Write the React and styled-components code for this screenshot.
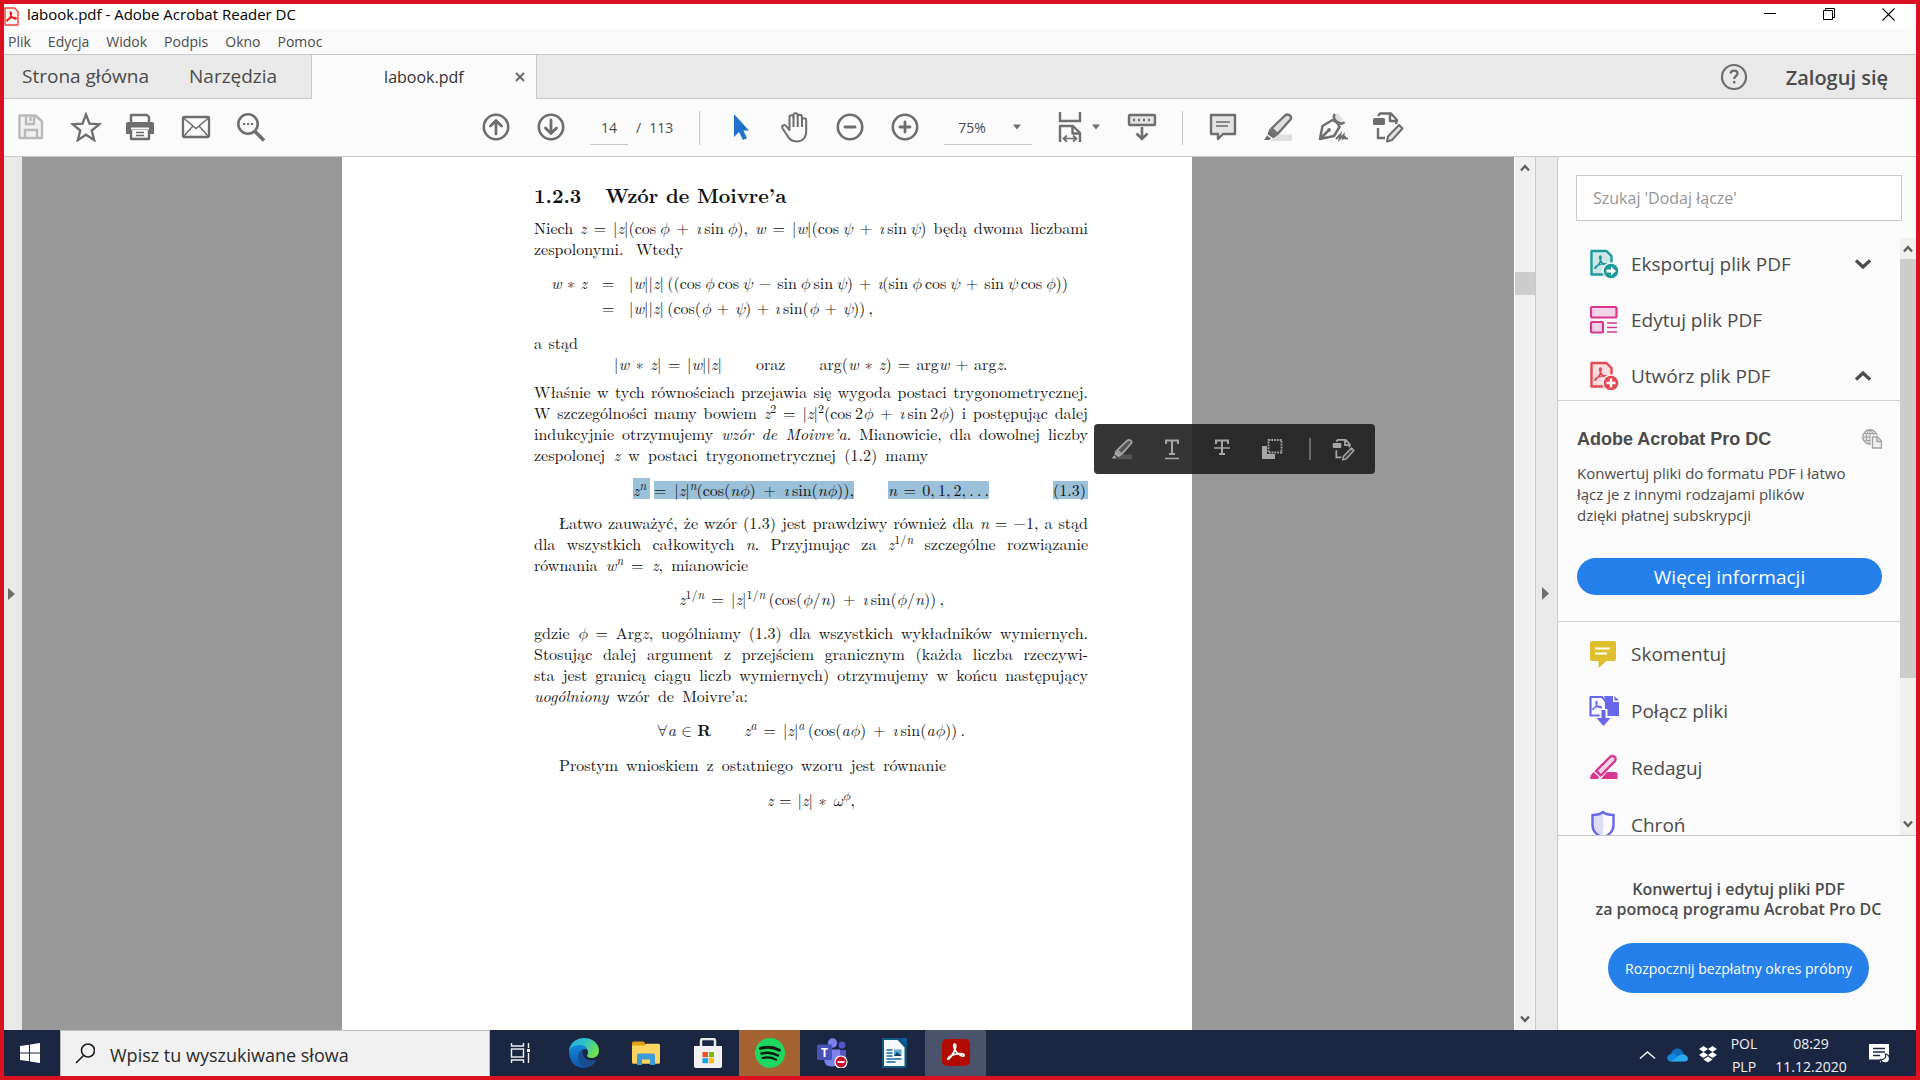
import React from "react";
import styled, { createGlobalStyle, css } from "styled-components";

const GlobalStyle = createGlobalStyle`
  *, *::before, *::after { box-sizing: border-box; }
  body { margin: 0; font-family: "Segoe UI", "Open Sans", "Noto Sans", sans-serif; color: #4b4b4b; }
  button, input, select { font: inherit; color: inherit; }
  button { border: 0; padding: 0; background: none; cursor: pointer; }
  p, h1, h2, h3 { margin: 0; }
  svg { display: block; flex: none; }
`;

/* ---------- window ---------- */
const Window = styled.div`
  height: 100vh;
  display: flex;
  flex-direction: column;
  border: 4px solid #d91120;
  background: #fbfbfb;
  overflow: hidden;
`;
const TitleBar = styled.header`
  display: flex;
  align-items: center;
  height: 25px;
  flex: none;
  background: #fff;
  padding-right: 21px;
`;
const WindowTitle = styled.h1`
  flex: 1;
  margin-left: 8px;
  font-size: 15px;
  line-height: 20px;
  font-weight: 400;
  color: #000;
  padding-bottom: 5px;
`;
const WindowButtons = styled.div`
  display: flex;
  gap: 46px;
  padding-bottom: 5px;
`;
const MenuBar = styled.nav`
  display: flex;
  flex: none;
  gap: 17px;
  height: 26px;
  padding-left: 4px;
  border-bottom: 1px solid #c8c8c8;
  background: #fafafa;
  font-size: 14px;
  line-height: 25px;
`;
const TabBar = styled.nav`
  display: flex;
  flex: none;
  align-items: center;
  height: 44px;
  background: #e9e9e9;
  border-bottom: 1px solid #c8c8c8;
`;
const AppTab = styled.button`
  font-size: 19px;
  line-height: 24px;
  padding-bottom: 2px;
  margin-left: ${(p) => (p.$first ? 18 : 40)}px;
`;
const DocTab = styled.div`
  display: flex;
  align-items: center;
  align-self: stretch;
  width: 226px;
  margin: 0 0 -1px 34px;
  padding: 0 11px 0 72px;
  justify-content: space-between;
  border: solid #c8c8c8;
  border-width: 0 1px;
  background: #fbfbfb;
  font-size: 16px;
  color: #323232;
`;
const Account = styled.div`
  display: flex;
  align-items: center;
  gap: 38px;
  margin-left: auto;
  padding-right: 28px;
`;
const LoginButton = styled.button`
  padding-top: 2px;
  font-size: 20px;
  line-height: 24px;
  font-weight: 600;
`;

/* ---------- toolbar ---------- */
const Toolbar = styled.div`
  display: flex;
  flex: none;
  align-items: center;
  height: 58px;
  border-bottom: 1px solid #c8c8c8;
  font-size: 14px;
`;
const ToolGroup = styled.div`
  display: flex;
  align-items: center;
  margin-left: ${(p) => p.$before || 0}px;
`;
const ToolButton = styled.button`
  display: flex;
  justify-content: center;
  align-items: center;
  gap: 9px;
  width: 55px;
  height: 56px;
  padding-bottom: 2px;
`;
const PageInput = styled.input`
  width: 38px;
  height: 34px;
  margin: 0 8px 0 12px;
  border: 0;
  border-bottom: 1px solid #c8c8c8;
  background: none;
  text-align: center;
  padding: 0;
`;
const PageTotal = styled.span`
  display: flex;
  gap: 8px;
`;
const Divider = styled.span`
  width: 1px;
  height: 34px;
  background: #c8c8c8;
  margin: 0 12px 0 ${(p) => p.$before}px;
`;
const ZoomBox = styled.div`
  display: flex;
  align-items: center;
  width: 88px;
  height: 34px;
  margin: 0 12px;
  padding-right: 10px;
  border-bottom: 1px solid #c8c8c8;
`;
const ZoomSelect = styled.select`
  flex: 1;
  appearance: none;
  border: 0;
  background: none;
  padding: 0 0 0 14px;
`;

/* ---------- workspace ---------- */
const Workspace = styled.main`
  flex: 1;
  display: flex;
  min-height: 0;
`;
const Rail = styled.button`
  width: ${(p) => (p.$right ? 23 : 18)}px;
  display: flex;
  align-items: center;
  justify-content: center;
  padding-right: 2px;
  background: #e9e9e9;
  border: solid #c8c8c8;
  border-width: 0 ${(p) => (p.$right ? "1px 0 1px" : "0")};
`;
const Canvas = styled.div`
  flex: 1;
  display: flex;
  justify-content: center;
  padding-right: 2px;
  background: #999;
  overflow: hidden;
`;
const Page = styled.article`
  position: relative;
  width: 850px;
  padding: 25px 104px 0 192px;
  background: #fff;
  font-family: "Latin Modern Roman", "Liberation Serif", "DejaVu Serif", serif;
  font-size: 16px;
  line-height: 21px;
  color: #111;
`;
const Heading = styled.h2`
  display: flex;
  gap: 24px;
  font-size: 20px;
  line-height: 26px;
  font-weight: 700;
  margin-bottom: 9px;
`;
const Block = styled.div`
  margin-bottom: 13px;
`;
const Line = styled.p`
  white-space: nowrap;
  margin-left: ${(p) => p.$indent || 0}px;
  ${(p) => p.$w && css`width: ${p.$w}px;`}
  text-align: justify;
  text-align-last: justify;
`;
const EqTable = styled.div`
  display: grid;
  grid-template-columns: 36px 12px auto;
  column-gap: 15px;
  row-gap: 4px;
  padding-left: 17px;
  margin-bottom: 14px;
`;
const EqRow = styled.div`
  display: flex;
  align-items: flex-end;
  gap: 34px;
  padding-left: ${(p) => p.$start || 0}px;
  margin-bottom: ${(p) => (p.$after === undefined ? 14 : p.$after)}px;
`;
const Greek = styled.i`
  font-family: "Latin Modern Math", "Liberation Serif", "DejaVu Serif", serif;
  line-height: 0;
`;
const MathSign = styled(Greek)`
  font-style: normal;
`;
const Sup = styled.sup`
  font-size: 12px;
  line-height: 0;
  vertical-align: 6px;
`;
const Selected = styled.span`
  display: block;
  white-space: nowrap;
  width: ${(p) => p.$w}px;
  height: ${(p) => (p.$tall ? 21 : 18)}px;
  padding-top: ${(p) => (p.$tall ? 3 : 0)}px;
  line-height: 18px;
  background: #9bc0da;
  text-align-last: justify;
  ${(p) => p.$next && css`margin-left: -30px;`}
  ${(p) => p.$end && css`margin-left: auto;`}
`;
const FloatBar = styled.div`
  position: absolute;
  left: 752px;
  top: 267px;
  display: flex;
  align-items: center;
  width: 281px;
  height: 50px;
  padding-left: 3px;
  border-radius: 4px;
  background: rgba(31, 31, 31, 0.9);
`;
const FloatButton = styled.button`
  display: flex;
  justify-content: center;
  width: 50px;
`;
const FloatDivider = styled.span`
  width: 2px;
  height: 22px;
  margin: 0 7px 0 12px;
  background: #6a6a6a;
`;
const ScrollTrack = styled.div`
  display: flex;
  flex-direction: column;
  justify-content: space-between;
  align-items: center;
  flex: none;
  width: ${(p) => p.$w}px;
  padding: ${(p) => p.$pad}px 0;
  background: #f0f0f0;
  border-left: ${(p) => (p.$edge ? "1px solid #fff" : "0")};
`;
const Thumb = styled.span`
  width: 100%;
  height: ${(p) => p.$h}px;
  margin: ${(p) => p.$before}px 0 auto;
  background: #cdcdcd;
`;

/* ---------- side panel ---------- */
const Side = styled.aside`
  display: flex;
  flex-direction: column;
  flex: none;
  width: 358px;
  background: #fbfbfb;
`;
const SideSearch = styled.input`
  height: 46px;
  margin: 18px 14px 17px 18px;
  padding: 0 16px;
  border: 1px solid #c8c8c8;
  background: #fff;
  font-size: 16px;
  &::placeholder { color: #959595; opacity: 1; }
`;
const SideBody = styled.div`
  flex: 1;
  display: flex;
  min-height: 0;
  border-bottom: 1px solid #c8c8c8;
`;
const ToolList = styled.div`
  flex: 1;
  overflow: hidden;
`;
const ToolRow = styled.button`
  display: grid;
  grid-template-columns: 30px 1fr 16px;
  column-gap: 12px;
  align-items: center;
  width: 100%;
  height: ${(p) => (p.$tall ? 57 : 56)}px;
  padding: 0 29px 0 31px;
  font-size: 19px;
  line-height: 26px;
  text-align: left;
`;
const FirstRows = styled.div`
  height: 165px;
  margin-top: -2px;
  border-bottom: 1px solid #d2d2d2;
`;
const Promo = styled.section`
  padding: 28px 18px 26px 19px;
  border-bottom: 1px solid #d2d2d2;
`;
const PromoHead = styled.div`
  display: flex;
  justify-content: space-between;
  align-items: center;
  height: 20px;
`;
const PromoTitle = styled.h3`
  font: 700 18px/20px Arial, "Liberation Sans", sans-serif;
`;
const PromoText = styled.p`
  margin: 14px 0 32px;
  font-size: 15px;
  line-height: 21px;
`;
const Pill = styled.button`
  display: block;
  background: #2680eb;
  color: #fff;
  border-radius: 25px;
  width: ${(p) => (p.$small ? "261px" : "100%")};
  height: ${(p) => (p.$small ? 50 : 37)}px;
  font-size: ${(p) => (p.$small ? 14 : 19)}px;
`;
const RestRows = styled.div`
  padding-top: 3px;
`;
const SideFooter = styled.footer`
  display: flex;
  flex-direction: column;
  align-items: center;
  gap: 24px;
  height: 194px;
  padding-top: 43px;
  padding-left: 3px;
`;
const FooterText = styled.p`
  font-size: 16px;
  line-height: 20px;
  font-weight: 600;
  text-align: center;
`;

/* ---------- taskbar ---------- */
const Taskbar = styled.footer`
  display: flex;
  flex: none;
  height: 46px;
  background: #1b2742;
  color: #f2f2f2;
`;
const StartButton = styled.button`
  display: flex;
  align-items: center;
  justify-content: center;
  width: 56px;
  padding-right: 4px;
`;
const TaskSearch = styled.label`
  display: flex;
  align-items: center;
  width: 430px;
  padding-left: 14px;
  gap: 15px;
  background: #f1f1f1;
  border: solid #bdbdbd;
  border-width: 1px 1px 0;
`;
const TaskInput = styled.input`
  flex: 1;
  min-width: 0;
  padding: 2px 0 0;
  border: 0;
  background: none;
  font-size: 18px;
  &::placeholder { color: #2b2b2b; opacity: 1; }
`;
const TaskApps = styled.div`
  display: flex;
  gap: 1px;
  margin-left: 1px;
`;
const TaskButton = styled.button`
  display: flex;
  align-items: center;
  justify-content: center;
  width: 61px;
  background: ${(p) => p.$bg || "none"};
`;
const Tray = styled.div`
  display: flex;
  align-items: center;
  margin-left: auto;
  padding: 3px 25px 0 0;
`;
const TrayIcons = styled.div`
  display: flex;
  align-items: center;
  gap: 11px;
  margin-right: 13px;
`;
const TrayText = styled.div`
  width: ${(p) => p.$w}px;
  text-align: center;
  font-size: 14px;
  line-height: 23px;
  margin-right: ${(p) => p.$after}px;
  white-space: pre-line;
`;

/* ---------- icons ---------- */
const G = "#6e6e6e";
const Svg = ({ w, h, children, c = G, sw = 2.4, fill = "none" }) => (
  <svg width={w} height={h} viewBox={`0 0 ${w} ${h}`} fill={fill} stroke={c} strokeWidth={sw} aria-hidden="true">
    {children}
  </svg>
);
const Swirl = ({ c, sw = 1.5 }) => (
  <path
    d="M4 19C7 16.500 11 9.500 11.400 5.500C11.600 2 8.800 2 9.200 5.500C9.900 10 14 14.600 18 16C22 17.200 21.500 13.400 17 13.400C12 13.400 7 15 4.200 17.200C1.500 19.500 2.600 20.600 4 19Z"
    stroke={c}
    strokeWidth={sw}
    fill="none"
    strokeLinejoin="round"
  />
);
const SaveIcon = () => (
  <Svg w={28} h={28} c="#b9b9b9" sw={2.4}>
    <path d="M2.500 2.500h16l6.500 6v16.500H2.500z" fill="#f1f1f1" strokeLinejoin="round" />
    <path d="M9 3v8h8V3M13.500 4v4M8 25v-8h12v8" />
  </Svg>
);
const StarIcon = () => (
  <Svg w={32} h={30} sw={2.3}>
    <path d="M16 2.500l3.500 9.200 9.800.5-7.600 6.300 2.500 9.600-8.200-5.400-8.200 5.400 2.500-9.600L2.700 12.200l9.800-.5z" />
  </Svg>
);
const PrintIcon = () => (
  <Svg w={30} h={28} sw={2.4}>
    <path d="M0 10.500Q0 9 2 9h24q2 0 2 1.500V21h-5v-4H5v4H0z" fill={G} stroke="none" />
    <path d="M5 10V2h16l2 2v6M5 16v10h18V16" strokeLinejoin="round" />
    <path d="M5 15.500h18" stroke="#fbfbfb" strokeWidth="2" />
    <path d="M10 19.500h8M10 22.500h8" strokeWidth="1.400" />
  </Svg>
);
const MailIcon = () => (
  <Svg w={30} h={26} sw={2.3}>
    <rect x="2" y="3" width="26" height="20" rx="1" />
    <path d="M2.500 4L15 14.500 27.500 4M2.500 22.500l9-10M27.500 22.500l-9-10" strokeWidth="1.500" />
  </Svg>
);
const FindIcon = () => (
  <Svg w={30} h={30} sw={2.600}>
    <circle cx="12" cy="12" r="9.700" />
    <path d="M18.500 19l9.500 9.500" strokeWidth="3.600" />
    <path d="M7 12h2.200M11 12h2.200M15 12h2.200" strokeWidth="2.200" />
  </Svg>
);
const CircleIcon = ({ d }) => (
  <Svg w={28} h={28} sw={2.6}>
    <circle cx="14" cy="14" r="12.200" />
    <path d={d} strokeWidth="2.800" strokeLinecap="round" strokeLinejoin="round" />
  </Svg>
);
const CursorIcon = () => (
  <Svg w={20} h={28}>
    <path d="M4 1v23l5-5 4 8 4-1.800-3.600-7.700H19z" fill="#1f73cc" stroke="none" />
  </Svg>
);
const HandIcon = () => (
  <Svg w={30} h={32} sw={2}>
    <path d="M9.500 17V6.500c0-3 4-3 4 0V4.500c0-3 4.200-3 4.200 0V6c0-3 4.200-3 4.200 0v3.500c0-3 4.300-3 4.300 0V20c0 7-4 10.500-9.700 10.500-5 0-7.500-2.500-9.500-6.500L2.600 17.500c-1.400-3 1.700-4.600 3.600-2.300L9.500 19z" strokeLinejoin="round" />
    <path d="M13.500 6v10M17.700 6v10M22 8v8" />
  </Svg>
);
const Caret = () => (
  <Svg w={10} h={6}>
    <path d="M1 .5h8L5 5.500z" fill={G} stroke="none" />
  </Svg>
);
const FitIcon = () => (
  <Svg w={24} h={32} sw={2.4}>
    <path d="M2 1v9h20V1" />
    <path d="M2 31V15h13l7 7v9M14.500 15v7.500H22" strokeLinejoin="round" />
    <path d="M6 27.500h12M9 24.500l-3.500 3 3.500 3M15 24.500l3.500 3-3.500 3" strokeWidth="1.700" />
  </Svg>
);
const KeysIcon = () => (
  <Svg w={30} h={30} sw={2.4}>
    <rect x="2" y="3" width="26" height="10" rx="1" fill="#e4e4e4" />
    <path d="M6 8h2M11 8h2M16 8h2M21 8h2" />
    <path d="M15 15v12M9.500 21.500L15 27l5.500-5.500" strokeWidth="2.600" />
  </Svg>
);
const CommentIcon = () => (
  <Svg w={28} h={30} sw={2.4}>
    <path d="M2 3h24v19H14l-5 5v-5H2z" fill="#e4e4e4" strokeLinejoin="round" />
    <path d="M7 10h14M7 14h12" strokeWidth="1.600" />
  </Svg>
);
const MarkerIcon = ({ c = G, soft = "#e0e0e0", s = 30 }) => (
  <svg width={s} height={s} viewBox="0 0 30 30" fill="none" stroke={c} strokeWidth="2.400" aria-hidden="true">
    <path d="M12 22.500h17V29H8z" fill={soft} stroke="none" />
    <path d="M8.500 16.500L22 3.500c3-2.500 7.500.5 5.500 4L14.500 22z" fill={soft} strokeLinejoin="round" />
    <path d="M6.500 16.500l8 7-4.500 2.800-5.500-4zM4 23.500l4 3L6.500 28H1z" fill={c} stroke="none" />
  </svg>
);
const PenIcon = () => (
  <Svg w={30} h={30} sw={2.2}>
    <path d="M16.500 4.500L19.500 1l6 7-4 3z" fill="#e0e0e0" stroke="none" />
    <path d="M2 27L4.500 14l10-6c3 1 6 4 7 7L16 24zM2.500 26.500l8-8" strokeLinejoin="round" strokeWidth="2.500" />
    <path d="M17 2c-2 2-1.500 5 1.500 7.500s6 3 8 .5" strokeWidth="2.600" />
    <circle cx="11" cy="18" r="1.900" fill={G} stroke="none" />
    <path d="M18 27l4.500-4.500-1 4.500 4-4-.5 3.500 2-1.500 .5 1.500H30" strokeWidth="2" />
  </Svg>
);
const EditDocIcon = ({ c = G, s = 32, soft = "#e4e4e4" }) => (
  <svg width={s} height={s} viewBox="0 0 32 32" fill="none" stroke={c} strokeWidth="2.400" aria-hidden="true">
    <path d="M6 5l2-2.500h11l6 6.500-1 4M18 3v7h6" strokeLinejoin="round" />
    <rect x="1" y="7" width="12" height="7" rx="1.500" fill={c} stroke="none" />
    <path d="M6 17v10h7" />
    <path d="M16 25.500L27 14l3.500 3.500L20 29l-5 1.500z" fill={soft} strokeWidth="2" strokeLinejoin="round" />
  </svg>
);
const Chevron = ({ up, w = 16, h = 10, c = "#4b4b4b", sw = 3.2 }) => (
  <Svg w={w} h={h} c={c} sw={sw}>
    <path d={up ? `M1 ${h - 1.5}L${w / 2} 2l${w / 2 - 1} ${h - 3.5}` : `M1 1.500L${w / 2} ${h - 2}l${w / 2 - 1} ${3.5 - h}`} />
  </Svg>
);
const PdfFileIcon = ({ c, soft, arrow }) => (
  <Svg w={30} h={30} c={c} sw={2.4}>
    <path d="M2.500 2h15l5 5v18.500h-20z" fill={soft} strokeLinejoin="round" />
    <g transform="translate(4 5) scale(.72)"><Swirl c={c} sw={2} /></g>
    <circle cx="22" cy="22" r="8" fill={c} stroke="#fbfbfb" strokeWidth="1.400" />
    {arrow ? (
      <path d="M17.500 20.500H22V17.500l5 4.500-5 4.500v-3h-4.500z" fill="#fff" stroke="none" />
    ) : (
      <path d="M22 17.500v9M17.500 22h9" stroke="#fff" strokeWidth="2.400" />
    )}
  </Svg>
);
const EditPdfIcon = () => (
  <Svg w={30} h={30} c="#d83790" sw={2.2}>
    <rect x="2" y="2" width="25.500" height="10.500" rx="1" fill="#f5d3e6" />
    <rect x="2" y="17" width="12" height="10.500" rx="1" fill="#f5d3e6" />
    <path d="M18 18h10M18 22.500h10M18 27h10" strokeWidth="1.500" />
  </Svg>
);
const NoteIcon = () => (
  <Svg w={30} h={30} c="none">
    <path d="M3 2h22q2 0 2 2v16q0 2-2 2h-7.500l-8 7v-7H3q-2 0-2-2V4q0-2 2-2z" fill="#dfbf2e" />
    <path d="M6 9.500h15M6 14.500h12" stroke="#fff" strokeWidth="2.200" />
  </Svg>
);
const CombineIcon = () => (
  <Svg w={30} h={32} c="#6767ec" sw={2.2}>
    <path d="M15 1h9v6h6v14H18V8z" fill="#6767ec" stroke="none" />
    <path d="M25.500 1l4.500 4.500h-4.500z" fill="#6767ec" stroke="none" />
    <path d="M12 20.500H1.500V2H13l4 4.500V15" fill="#fbfbfb" strokeLinejoin="round" />
    <g transform="translate(2.500 5) scale(.48)"><Swirl c="#6767ec" sw={2.600} /></g>
    <path d="M14.500 14v11" stroke="#fbfbfb" strokeWidth="8" />
    <path d="M12.500 15h4v8h5L14.500 31l-7-8h5z" fill="#6767ec" stroke="none" />
  </Svg>
);
const RedactIcon = () => (
  <Svg w={30} h={30} c="#d83790" sw={2.4}>
    <path d="M18 19h9q1.500 0 1.500 1.500V26H12z" fill="#d83790" stroke="none" />
    <path d="M7 18L21 4c2.500-2.500 7 0 5 4L12 22.500z" fill="#f5d3e6" strokeLinejoin="round" />
    <path d="M4.500 19l6 5.500-2 1.500H1q0-4 3.500-7z" fill="#d83790" stroke="none" />
  </Svg>
);
const ShieldIcon = () => (
  <Svg w={30} h={30} c="#6767ec" sw={2.4}>
    <path d="M14 2v25C9 24 4 21 4 15V5c4 0 7-1 10-3z" fill="#deddf8" stroke="none" />
    <path d="M14 2c3 2.500 6 3 10.500 3v10c0 7-5 10-10.500 13C8.500 25 3.500 22 3.500 15V5C8 5 11 4.500 14 2z" />
  </Svg>
);
const GlobeDocIcon = () => (
  <Svg w={20} h={20} c="#a2a2a2" sw={1.4}>
    <circle cx="8" cy="8" r="7.200" fill="#e8e8e8" />
    <path d="M8 1v14M1 8h14M2 4.500h12M2 11.500h12M8 1c-5 3-5 11 0 14M8 1c5 3 5 11 0 14" strokeWidth="1" />
    <path d="M10.500 8h5l4 4v7h-9z" fill="#f4f4f4" stroke="#fbfbfb" strokeWidth="3.500" />
    <path d="M10.500 8h5l4 4v7h-9z" fill="#f0f0f0" />
    <path d="M15 8v4.500h4" />
  </Svg>
);
const WindowsLogo = () => (
  <Svg w={20} h={20} c="none">
    <path d="M0 3l9-1.300V9.500H0zM10 1.500L20 0v9.500H10zM0 10.500h9v7.800L0 17zM10 10.500h10V20l-10-1.500z" fill="#fff" />
  </Svg>
);
const TaskViewIcon = () => (
  <Svg w={24} h={20} c="#f2f2f2" sw={1.4}>
    <path d="M1.500 0v3h12V0M1.500 20v-3h12v3" />
    <rect x="1.500" y="6" width="12" height="8" />
    <path d="M18.500 0v5M18.500 10v10" />
    <path d="M17 6h3v3h-3z" fill="#fff" stroke="none" />
  </Svg>
);
const EdgeIcon = () => (
  <Svg w={30} h={30} c="none">
    <defs>
      <linearGradient id="edgeTop" x1="0" y1="0" x2="1" y2=".5"><stop offset="0" stopColor="#2aa8e8" /><stop offset=".5" stopColor="#2fc3c8" /><stop offset="1" stopColor="#6fe04f" /></linearGradient>
      <linearGradient id="edgeLow" x1="0" y1="0" x2="0" y2="1"><stop offset="0" stopColor="#1689d8" /><stop offset="1" stopColor="#1055a8" /></linearGradient>
    </defs>
    <path d="M0 14C0 5.500 7 0 15 0c9 0 15 6 15 12.500 0 5-3.500 7.500-7.500 7.500-3 0-4.500-1-4.500-2.200 0-1 1-1.500 1-3.600C19 11 16 8.500 11.500 8.500 6 8.500 1 11 0 14z" fill="url(#edgeTop)" />
    <path d="M0 14c.5-4 5-7 10.500-7 4.500 0 7 2 8 4.500-4-2-9 1-9 7C9.500 24 13 29 18 29.700 8 31.500 0 25 0 14z" fill="url(#edgeLow)" />
    <path d="M9.500 18.500C9.500 14 12 11.500 15 11c-2 2-2 6 1 9 3.500 3 8.500 3 11.500 2-2 4-6 7.300-10 7.300-5 0-8-5-7.500-10.800z" fill="#174f91" />
  </Svg>
);
const FolderIcon = () => (
  <Svg w={28} h={24} c="none">
    <path d="M0 2q0-1.500 1.500-1.500H11q1.500 0 2 2V7H0z" fill="#e3a008" />
    <path d="M0 4.500h12l2-1.700h12.500q1.500 0 1.500 1.500v17q0 1.500-1.500 1.500h-25Q0 22.800 0 21.300z" fill="#fcd462" />
    <path d="M5 24V14.500q0-2 2-2h14q2 0 2 2V24h-5v-5.500H10V24z" fill="#3f9ad8" />
  </Svg>
);
const StoreIcon = () => (
  <Svg w={30} h={30} c="none">
    <path d="M8 10V3q0-2 2-2h10q2 0 2 2v7" stroke="#e9e9e9" strokeWidth="2.500" />
    <path d="M1 8h28v20q0 2-2 2H3q-2 0-2-2z" fill="#f1f1f1" />
    <path d="M9.500 14H15v5.200H9.500z" fill="#f25022" /><path d="M16 14h5v5.200h-5z" fill="#7fba00" />
    <path d="M9.500 20.200H15v5H9.500z" fill="#00a4ef" /><path d="M16 20.200h5v5h-5z" fill="#ffb900" />
  </Svg>
);
const SpotifyIcon = () => (
  <Svg w={30} h={30} c="#0c1a10">
    <circle cx="15" cy="15" r="15" fill="#1ed760" stroke="none" />
    <path d="M5.500 10.500c6-2 13.500-1.500 19 1.700" strokeWidth="3" strokeLinecap="round" />
    <path d="M6.500 15.500c5.500-1.500 11.500-.8 16.500 2" strokeWidth="2.500" strokeLinecap="round" />
    <path d="M7.500 20c5-1.200 9.500-.6 13.500 1.700" strokeWidth="2.100" strokeLinecap="round" />
  </Svg>
);
const TeamsLetter = styled.text`
  font: 700 12px "Open Sans", "Noto Sans", sans-serif;
`;
const TeamsIcon = () => (
  <Svg w={32} h={30} c="none">
    <circle cx="26" cy="7" r="3.500" fill="#5059c9" /><circle cx="16.500" cy="5" r="4.700" fill="#7b83eb" />
    <path d="M20 12h10v9q0 5-5 5h-5z" fill="#5059c9" />
    <path d="M8 11.500h16V21q0 7.500-8 7.500T8 21z" fill="#7b83eb" />
    <rect x="1" y="6.500" width="15" height="15.500" rx="1" fill="#4a51b8" />
    <TeamsLetter x="8.500" y="18.500" textAnchor="middle" fill="#fff">T</TeamsLetter>
    <circle cx="25" cy="24" r="6" fill="#c4122f" stroke="#fff" strokeWidth="1.200" />
    <path d="M21.500 24h7" stroke="#fff" strokeWidth="1.800" />
  </Svg>
);
const WriterIcon = () => (
  <Svg w={26} h={30} c="none">
    <path d="M2 1h15l7.500 8v20H2z" fill="#f5fafd" stroke="#135a86" strokeWidth="2" />
    <path d="M18 0h8v9z" fill="#0a5d96" />
    <path d="M5.500 12h6M5.500 15h6M5.500 18h6M5.500 21h15M5.500 24h9" stroke="#16699c" strokeWidth="1.500" />
    <path d="M13 11.500h7.500v6.500H13z" fill="#5fa9d5" /><path d="M13 18l3-4 4.500 4z" fill="#14405c" />
  </Svg>
);
const AcrobatIcon = () => (
  <Svg w={28} h={28} c="none">
    <rect width="28" height="27" rx="5" fill="#b30b00" />
    <g transform="translate(3.500 2.500) scale(.9)"><Swirl c="#fff" sw={2} /></g>
  </Svg>
);
const SmallPdf = () => (
  <Svg w={15} h={19} c="#ef4136" sw={1.4}>
    <path d="M1 1h9.500L14 4.500V18H1z" fill="#fff5f4" strokeLinejoin="round" />
    <g transform="translate(1.500 3.500) scale(.52)"><Swirl c="#e2231a" sw={3} /></g>
  </Svg>
);
const CloudIcon = () => (
  <Svg w={21} h={14} c="none">
    <path d="M4 7c0-4 3-6.500 6.500-6.500S16 3 16.500 6L8 11z" fill="#0f6cbd" />
    <path d="M4 13.500c-5 0-5-7 0-7.500 2-1 4 0 5 1l7 6z" fill="#1488dd" />
    <path d="M4 13.500L13 7c3-2 7.500 0 8 3.500 0 2-1.500 3-3.500 3z" fill="#2ba8f0" />
  </Svg>
);
const DropboxIcon = () => (
  <Svg w={18} h={17} c="none">
    <path d="M4.500 0L9 3 4.500 6 0 3zM13.500 0L18 3l-4.500 3L9 3zM4.500 6L9 9l-4.500 3L0 9zM13.500 6L18 9l-4.500 3L9 9zM9 10.500l4.500 3L9 16.500l-4.500-3z" fill="#fff" />
  </Svg>
);
const NotifyIcon = () => (
  <Svg w={22} h={21} c="none">
    <path d="M0 0h20v15.500h-6l-3 3.500v-3.500H0z" fill="#fff" />
    <path d="M4 4.500h12M4 8h12M4 11.500h7" stroke="#1b2742" strokeWidth="1.300" />
    <path d="M16.500 10c1 4-1.500 6-5 5.500 1.500 5 9.500 4.500 9-1-.2-2.300-1.500-4-4-4.500z" fill="#fff" stroke="#1b2742" strokeWidth="1.200" />
  </Svg>
);
const FC = "#a6a6a6";
const TextMark = ({ strike }) => (
  <Svg w={18} h={22} c={FC} sw={2}>
    <path d="M3 6V2.500h12V6M9 2.500V16M6 16h6" />
    <path d={strike ? "M1 10h16" : "M2 20.500h14"} strokeWidth="1.500" />
  </Svg>
);
const CopyAreaIcon = () => (
  <Svg w={22} h={22} c={FC} sw={1.8}>
    <path d="M1 8h5v8h8v5H1z" fill={FC} stroke="none" />
    <rect x="7.500" y="2" width="13" height="12.500" strokeDasharray="1.800 1" />
  </Svg>
);

/* ---------- content ---------- */
const z = <i>z</i>;
const w = <i>w</i>;
const n = <i>n</i>;
const a = <i>a</i>;
const phi = <Greek>ϕ</Greek>;
const psi = <Greek>ψ</Greek>;
const im = <i>ı</i>;
const t = "\u2009";

const DocumentPage = () => (
  <Page>
    <Heading><span>1.2.3</span><span>Wzór de Moivre’a</span></Heading>
    <Block>
      <Line>Niech {z} = |{z}|(cos{t}{phi} + {im}{t}sin{t}{phi}), {w} = |{w}|(cos{t}{psi} + {im}{t}sin{t}{psi}) będą dwoma liczbami</Line>
      <Line $w={149}>zespolonymi. Wtedy</Line>
    </Block>
    <EqTable>
      <Line>{w} ∗ {z}</Line><span>=</span>
      <Line $w={439}>|{w}||{z}|{t}((cos{t}{phi}{t}cos{t}{psi} − sin{t}{phi}{t}sin{t}{psi}) + {im}(sin{t}{phi}{t}cos{t}{psi} + sin{t}{psi}{t}cos{t}{phi}))</Line>
      <span /><span>=</span>
      <Line $w={244}>|{w}||{z}|{t}(cos({phi} + {psi}) + {im}{t}sin({phi} + {psi})){t},</Line>
    </EqTable>
    <Line $w={44}>a stąd</Line>
    <EqRow $start={80} $after={7}>
      <Line $w={108}>|{w} ∗ {z}| = |{w}||{z}|</Line>
      <span>oraz</span>
      <Line $w={188}>arg({w} ∗ {z}) = arg{w} + arg{z}.</Line>
    </EqRow>
    <Block>
      <Line>Właśnie w tych równościach przejawia się wygoda postaci trygonometrycznej.</Line>
      <Line>W szczególności mamy bowiem {z}<Sup>2</Sup> = |{z}|<Sup>2</Sup>(cos{t}2{phi} + {im}{t}sin{t}2{phi}) i postępując dalej</Line>
      <Line>indukcyjnie otrzymujemy <i>wzór de Moivre’a</i>. Mianowicie, dla dowolnej liczby</Line>
      <Line $w={394}>zespolonej {z} w postaci trygonometrycznej (1.2) mamy</Line>
    </Block>
    <EqRow $start={99} $after={13}>
      <Selected $w={17} $tall>{z}<Sup>{n}</Sup></Selected>
      <Selected $w={200} $next>= |{z}|<Sup>{n}</Sup>(cos({n}{phi}) + {im}{t}sin({n}{phi})),</Selected>
      <Selected $w={101}>{n} = 0,{t}1,{t}2,{t}.{t}.{t}.</Selected>
      <Selected $w={35} $end>(1.3)</Selected>
    </EqRow>
    <Block>
      <Line $indent={25}>Łatwo zauważyć, że wzór (1.3) jest prawdziwy również dla {n} = −1, a stąd</Line>
      <Line>dla wszystkich całkowitych {n}. Przyjmując za {z}<Sup>1/{n}</Sup> szczególne rozwiązanie</Line>
      <Line $w={214}>równania {w}<Sup>{n}</Sup> = {z}, mianowicie</Line>
    </Block>
    <EqRow $start={145} $after={13}>
      <Line $w={265}>{z}<Sup>1/{n}</Sup> = |{z}|<Sup>1/{n}</Sup>{t}(cos({phi}/{n}) + {im}{t}sin({phi}/{n})){t},</Line>
    </EqRow>
    <Block>
      <Line>gdzie {phi} = Arg{z}, uogólniamy (1.3) dla wszystkich wykładników wymiernych.</Line>
      <Line>Stosując dalej argument z przejściem granicznym (każda liczba rzeczywi-</Line>
      <Line>sta jest granicą ciągu liczb wymiernych) otrzymujemy w końcu następujący</Line>
      <Line $w={214}><i>uogólniony</i> wzór de Moivre’a:</Line>
    </Block>
    <EqRow $start={123}>
      <Line $w={53}><MathSign>∀</MathSign>{a} <MathSign>∈</MathSign> <b>R</b></Line>
      <Line $w={221}>{z}<Sup>{a}</Sup> = |{z}|<Sup>{a}</Sup>{t}(cos({a}{phi}) + {im}{t}sin({a}{phi})){t}.</Line>
    </EqRow>
    <EqRow $start={25}>
      <Line $w={387}>Prostym wnioskiem z ostatniego wzoru jest równanie</Line>
    </EqRow>
    <EqRow $start={233}>
      <Line $w={88}>{z} = |{z}| ∗ <Greek>ω</Greek><Sup>{phi}</Sup>,</Line>
    </EqRow>
    <FloatBar>
      <FloatButton aria-label="Wyróżnij"><MarkerIcon c={FC} soft="#555" s={22} /></FloatButton>
      <FloatButton aria-label="Podkreśl"><TextMark /></FloatButton>
      <FloatButton aria-label="Przekreśl"><TextMark strike /></FloatButton>
      <FloatButton aria-label="Kopiuj"><CopyAreaIcon /></FloatButton>
      <FloatDivider />
      <FloatButton aria-label="Edytuj"><EditDocIcon c={FC} soft="#444" s={23} /></FloatButton>
    </FloatBar>
  </Page>
);

const menu = ["Plik", "Edycja", "Widok", "Podpis", "Okno", "Pomoc"];
const leftTools = [["Zapisz", SaveIcon], ["Ulubione", StarIcon], ["Drukuj", PrintIcon], ["Wyślij", MailIcon], ["Znajdź", FindIcon]];
const rightTools = [["Komentarz", CommentIcon], ["Wyróżnienie", MarkerIcon], ["Podpisz", PenIcon], ["Edycja dokumentu", EditDocIcon]];
const apps = [["Edge", EdgeIcon], ["Eksplorator", FolderIcon], ["Store", StoreIcon], ["Spotify", SpotifyIcon, "#a56334"], ["Teams", TeamsIcon], ["Writer", WriterIcon], ["Acrobat", AcrobatIcon, "#4a536b"]];

export default function App() {
  return (
    <>
      <GlobalStyle />
      <Window>
        <TitleBar>
          <SmallPdf />
          <WindowTitle>labook.pdf - Adobe Acrobat Reader DC</WindowTitle>
          <WindowButtons>
            <button aria-label="Minimalizuj"><Svg w={13} h={13} c="#000" sw={1}><path d="M0 5.500h12" /></Svg></button>
            <button aria-label="Przywróć"><Svg w={13} h={13} c="#000" sw={1}><path d="M.5 2.500h9v9h-9zM2.500 2.500v-2h9v9h-2" /></Svg></button>
            <button aria-label="Zamknij"><Svg w={13} h={13} c="#000" sw={1.1}><path d="M.5.5l12 12M12.500.5l-12 12" /></Svg></button>
          </WindowButtons>
        </TitleBar>
        <MenuBar>{menu.map((m) => <button key={m}>{m}</button>)}</MenuBar>
        <TabBar>
          <AppTab $first>Strona główna</AppTab>
          <AppTab>Narzędzia</AppTab>
          <DocTab>
            <span>labook.pdf</span>
            <button aria-label="Zamknij kartę"><Svg w={10} h={10} sw={2.2}><path d="M1 1l8 8M9 1L1 9" /></Svg></button>
          </DocTab>
          <Account>
            <button aria-label="Pomoc">
              <Svg w={28} h={28} sw={2.2}>
                <circle cx="14" cy="14" r="12" />
                <path d="M10.500 10.500c.5-4 7-3.500 7 0 0 2.500-3.300 2.800-3.300 5.500M14.200 18v2.400" strokeWidth="2.300" />
              </Svg>
            </button>
            <LoginButton>Zaloguj się</LoginButton>
          </Account>
        </TabBar>
        <Toolbar>
          <ToolGroup $before={-1}>
            {leftTools.map(([label, I]) => <ToolButton key={label} aria-label={label}><I /></ToolButton>)}
          </ToolGroup>
          <ToolGroup $before={190}>
            <ToolButton aria-label="Poprzednia strona"><CircleIcon d="M14 21V8M8.500 13L14 7.500l5.500 5.500" /></ToolButton>
            <ToolButton aria-label="Następna strona"><CircleIcon d="M14 7v13M8.500 15l5.500 5.500 5.500-5.500" /></ToolButton>
            <PageInput aria-label="Numer strony" defaultValue="14" />
            <PageTotal><span>/</span><span>113</span></PageTotal>
          </ToolGroup>
          <Divider $before={26} />
          <ToolGroup>
            <ToolButton aria-label="Zaznaczanie"><CursorIcon /></ToolButton>
            <ToolButton aria-label="Rączka"><HandIcon /></ToolButton>
            <ToolButton aria-label="Pomniejsz"><CircleIcon d="M9 14h10" /></ToolButton>
            <ToolButton aria-label="Powiększ"><CircleIcon d="M9 14h10M14 9v10" /></ToolButton>
            <ZoomBox>
              <ZoomSelect aria-label="Powiększenie" defaultValue="75%"><option>75%</option></ZoomSelect>
              <Caret />
            </ZoomBox>
          </ToolGroup>
          <ToolGroup $before={8}>
            <ToolButton aria-label="Dopasuj szerokość"><FitIcon /><Caret /></ToolButton>
          </ToolGroup>
          <ToolGroup $before={7}>
            <ToolButton aria-label="Przewijanie"><KeysIcon /></ToolButton>
          </ToolGroup>
          <Divider $before={13} />
          <ToolGroup>
            {rightTools.map(([label, I]) => <ToolButton key={label} aria-label={label}><I /></ToolButton>)}
          </ToolGroup>
        </Toolbar>
        <Workspace>
          <Rail aria-label="Pokaż panel nawigacji"><Svg w={8} h={12}><path d="M0 0l7 6-7 6z" fill={G} stroke="none" /></Svg></Rail>
          <Canvas><DocumentPage /></Canvas>
          <ScrollTrack $w={21} $pad={7} $edge>
            <Chevron up w={10} h={8} c="#606060" sw={2.4} />
            <Thumb $h={23} $before={100} />
            <Chevron w={10} h={8} c="#606060" sw={2.4} />
          </ScrollTrack>
          <Rail $right aria-label="Ukryj panel narzędzi"><Svg w={8} h={14}><path d="M0 0l7 6.500L0 13z" fill={G} stroke="none" /></Svg></Rail>
          <Side>
            <SideSearch aria-label="Szukaj narzędzi" placeholder="Szukaj 'Dodaj łącze'" />
            <SideBody>
              <ToolList>
                <FirstRows>
                  <ToolRow><PdfFileIcon c="#1c9a9a" soft="#cfe6e8" arrow /><span>Eksportuj plik PDF</span><Chevron /></ToolRow>
                  <ToolRow><EditPdfIcon /><span>Edytuj plik PDF</span></ToolRow>
                  <ToolRow><PdfFileIcon c="#e34850" soft="#f8dcde" /><span>Utwórz plik PDF</span><Chevron up /></ToolRow>
                </FirstRows>
                <Promo>
                  <PromoHead><PromoTitle>Adobe Acrobat Pro DC</PromoTitle><GlobeDocIcon /></PromoHead>
                  <PromoText>Konwertuj pliki do formatu PDF i łatwo<br />łącz je z innymi rodzajami plików<br />dzięki płatnej subskrypcji</PromoText>
                  <Pill>Więcej informacji</Pill>
                </Promo>
                <RestRows>
                  <ToolRow $tall><NoteIcon /><span>Skomentuj</span></ToolRow>
                  <ToolRow $tall><CombineIcon /><span>Połącz pliki</span></ToolRow>
                  <ToolRow $tall><RedactIcon /><span>Redaguj</span></ToolRow>
                  <ToolRow $tall><ShieldIcon /><span>Chroń</span></ToolRow>
                </RestRows>
              </ToolList>
              <ScrollTrack $w={16} $pad={7}>
                <Chevron up w={10} h={8} c="#606060" sw={2.4} />
                <Thumb $h={419} $before={6} />
                <Chevron w={10} h={8} c="#606060" sw={2.4} />
              </ScrollTrack>
            </SideBody>
            <SideFooter>
              <FooterText>Konwertuj i edytuj pliki PDF<br />za pomocą programu Acrobat Pro DC</FooterText>
              <Pill $small>Rozpocznij bezpłatny okres próbny</Pill>
            </SideFooter>
          </Side>
        </Workspace>
        <Taskbar>
          <StartButton aria-label="Start"><WindowsLogo /></StartButton>
          <TaskSearch>
            <Svg w={20} h={21} c="#1c1c1c" sw={1.6}><circle cx="13" cy="7.500" r="6.500" /><path d="M8.500 12.500L1 20" /></Svg>
            <TaskInput aria-label="Wyszukiwanie" placeholder="Wpisz tu wyszukiwane słowa" />
          </TaskSearch>
          <TaskApps>
            <TaskButton aria-label="Widok zadań"><TaskViewIcon /></TaskButton>
            {apps.map(([label, I, bg]) => <TaskButton key={label} aria-label={label} $bg={bg}><I /></TaskButton>)}
          </TaskApps>
          <Tray>
            <TrayIcons>
              <Chevron up w={17} h={10} c="#f2f2f2" sw={1.6} />
              <CloudIcon />
              <DropboxIcon />
            </TrayIcons>
            <TrayText $w={28} $after={17}>{"POL\nPLP"}</TrayText>
            <TrayText $w={72} $after={22}>{"08:29\n11.12.2020"}</TrayText>
            <NotifyIcon />
          </Tray>
        </Taskbar>
      </Window>
    </>
  );
}
